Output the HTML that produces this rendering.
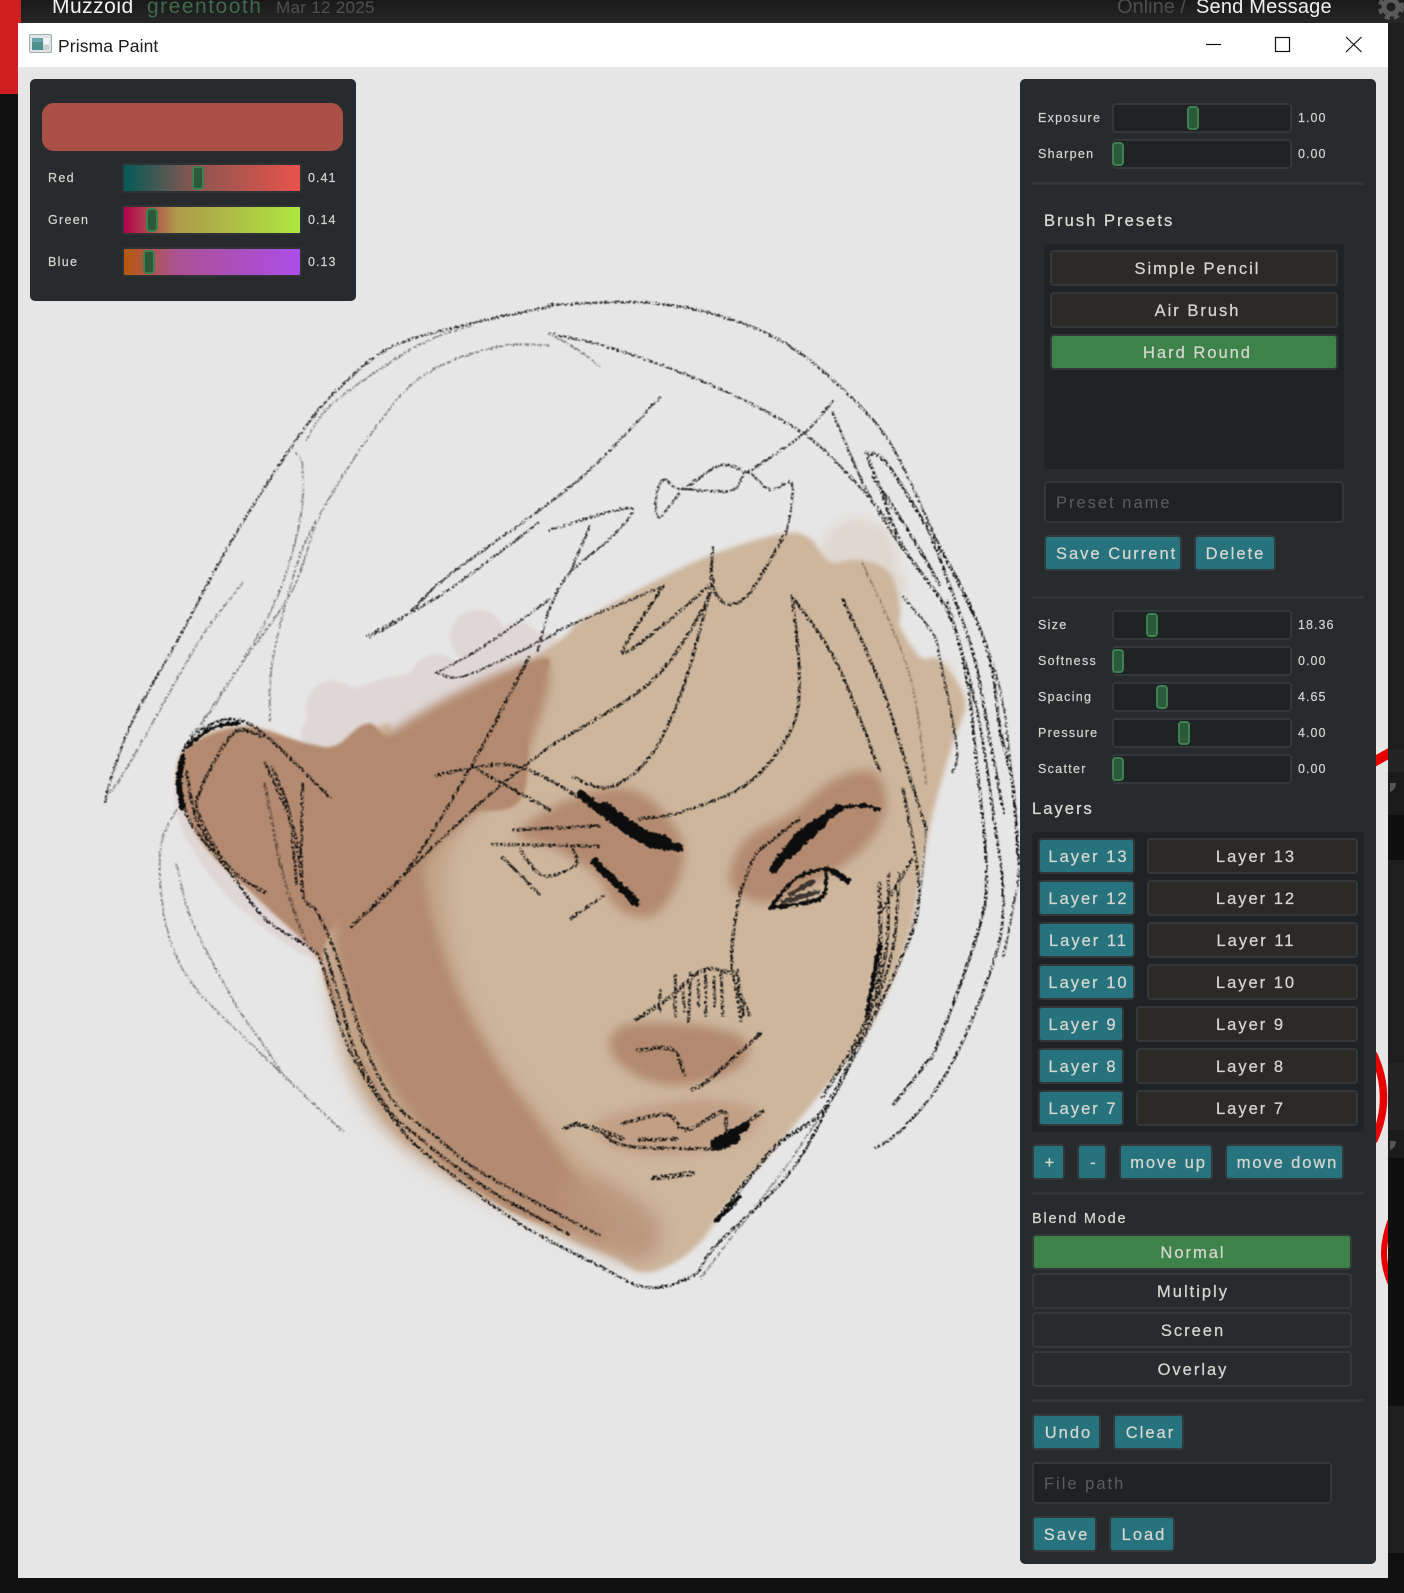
<!DOCTYPE html>
<html><head><meta charset="utf-8"><title>Prisma Paint</title>
<style>
html,body{margin:0;padding:0;background:#101010}
#r{position:relative;width:1404px;height:1593px;overflow:hidden;background:#101010;font-family:"Liberation Sans",sans-serif}
#r div,#r span{position:absolute;box-sizing:border-box;white-space:nowrap}
.t{height:20px;line-height:20px;color:#d2d2cc}
.l{font-size:12.5px;letter-spacing:1.3px;color:#d4d4cf;-webkit-text-stroke:.2px}
.v{letter-spacing:1.05px}
.h{font-size:16.5px;letter-spacing:2.05px;color:#dcdcd6;-webkit-text-stroke:.25px}
.p{border-radius:5px;background:#272b2e}
.tr{background:#1f2326;border:2px solid #33383b;border-radius:4px;height:30px;left:1112px;width:180px}
.hd{background:#2a5a3a;border:2px solid #3f8050;border-radius:4px;width:12px;height:24px}
.b{border:2px solid #33383b;border-radius:4px;height:36px;line-height:34px;text-align:center;font-size:16.5px;letter-spacing:2px;color:#d6d6d0;padding-left:4px;-webkit-text-stroke:.25px}
.te{background:#26737d}.br{background:#2d2926;padding-left:7px}.gr{background:#3d8249}.no{background:#272b2e;padding-left:2px}
.in{background:#1f2326;border:2px solid #33383b;border-radius:4px;height:42px;line-height:40px;font-size:16.5px;letter-spacing:2px;color:#5b5d5e;padding-left:10px}
.d{background:#30353a;height:3px;left:1032px;width:332px}
</style></head><body><div id="r">
<!-- background -->
<div style="left:0;top:0;width:1404px;height:23px;background:linear-gradient(#1a1a1a,#272727)"></div>
<div style="left:0;top:0;width:21px;height:94px;background:#d01f20"></div>
<div style="left:1388px;top:23px;width:16px;height:727px;background:#1e1e1e"></div>
<div style="left:1388px;top:750px;width:16px;height:22px;background:#242424"></div>
<div style="left:1388px;top:772px;width:16px;height:43px;background:#1b1b1b"></div>
<div style="left:1388px;top:815px;width:16px;height:45px;background:#0f0f0f"></div>
<div style="left:1388px;top:860px;width:16px;height:203px;background:#1e1e1e"></div>
<div style="left:1388px;top:1063px;width:16px;height:67px;background:#232323"></div>
<div style="left:1388px;top:1130px;width:16px;height:28px;background:#1b1b1b"></div>
<div style="left:1388px;top:1158px;width:16px;height:248px;background:#0f0f0f"></div>
<div style="left:1388px;top:1406px;width:16px;height:87px;background:#1e1e1e"></div>
<div style="left:1388px;top:1493px;width:16px;height:60px;background:#1e1e1e"></div>
<div class="t" style="left:52px;top:-3px;font-size:21px;color:#f2f2f2;letter-spacing:.5px">Muzzoid</div>
<div class="t" style="left:147px;top:-3px;font-size:21px;color:#3f6a4b;letter-spacing:1.5px">greentooth</div>
<div class="t" style="left:276px;top:-2px;font-size:17px;color:#4f5050;letter-spacing:.3px">Mar 12 2025</div>
<div class="t" style="left:1117px;top:-3px;font-size:20px;color:#4e4e4e">Online /</div>
<div class="t" style="left:1196px;top:-3px;font-size:20px;color:#f0f0f0;letter-spacing:.2px">Send Message</div>
<svg style="position:absolute;left:1376px;top:0" width="28" height="20"><circle cx="15" cy="7" r="7" fill="none" stroke="#5a5a5a" stroke-width="5"/><circle cx="15" cy="7" r="11" fill="none" stroke="#5a5a5a" stroke-width="4" stroke-dasharray="5 4.2"/></svg>
<svg style="position:absolute;left:1388px;top:780px" width="16" height="16"><path d="M2 3h6c0 5-3 8-6 9z" fill="#555"/></svg>
<svg style="position:absolute;left:1388px;top:1138px" width="16" height="16"><path d="M2 3h6c0 5-3 8-6 9z" fill="#555"/></svg>

<!-- window -->
<div style="left:18px;top:23px;width:1370px;height:1555px;background:#e6e6e6"></div>
<div style="left:18px;top:23px;width:1370px;height:44px;background:#fff"></div>
<svg style="position:absolute;left:29px;top:34px" width="24" height="20"><rect x=".5" y=".5" width="22" height="18" rx="1.5" fill="#dfe5e6" stroke="#a4abad"/><rect x="3" y="4" width="11" height="12" fill="#4e8f8c"/><rect x="15" y="4" width="5" height="6" fill="#f3f6f6"/><rect x="3" y="4" width="11" height="4" fill="#6aa5b0"/><rect x="14" y="11" width="6" height="5" fill="#c7d0d0"/></svg>
<div class="t" style="left:58px;top:36px;font-size:17.5px;color:#1c1c1c;letter-spacing:.1px">Prisma Paint</div>
<svg style="position:absolute;left:1200px;top:30px" width="170" height="30" fill="none" stroke="#111" stroke-width="1.2"><path d="M6 14.5H21"/><rect x="75.5" y="7.5" width="14" height="14"/><path d="M146 7L161.500 22M161.500 7L146 22"/></svg>

<!-- painting -->
<svg style="position:absolute;left:0;top:0" width="1404" height="1593" viewBox="0 0 1404 1593">
<defs>
<filter id="b0" x="-5%" y="-5%" width="110%" height="110%"><feGaussianBlur stdDeviation="2.4"/></filter>
<filter id="b1" x="-5%" y="-5%" width="110%" height="110%"><feGaussianBlur stdDeviation="1.6"/></filter>
<filter id="b2" x="-20%" y="-20%" width="140%" height="140%"><feGaussianBlur stdDeviation="5"/></filter>
<filter id="b3" x="-30%" y="-30%" width="160%" height="160%"><feGaussianBlur stdDeviation="9"/></filter>
<filter id="j" filterUnits="userSpaceOnUse" x="0" y="0" width="1404" height="1593" color-interpolation-filters="sRGB"><feTurbulence type="fractalNoise" baseFrequency=".42" numOctaves="2" seed="4" result="n"/><feDisplacementMap in="SourceGraphic" in2="n" scale="3.5" xChannelSelector="R" yChannelSelector="G" result="d"/><feColorMatrix in="n" type="matrix" values="0 0 0 0 0 0 0 0 0 0 0 0 0 0 0 7 0 0 0 -2.9" result="m"/><feComposite in="d" in2="m" operator="in"/><feGaussianBlur stdDeviation=".45"/></filter>
<filter id="k" filterUnits="userSpaceOnUse" x="0" y="0" width="1404" height="1593"><feTurbulence type="fractalNoise" baseFrequency=".3" numOctaves="2" seed="9" result="n"/><feDisplacementMap in="SourceGraphic" in2="n" scale="5.5" xChannelSelector="R" yChannelSelector="G"/><feGaussianBlur stdDeviation=".5"/></filter>
<clipPath id="w"><rect x="18" y="67" width="1370" height="1511"/></clipPath>
</defs>
<g transform="scale(1.0159)" id="sk">
<!-- pale fringes -->
<g fill="#dfd7d6" filter="url(#b1)">
<circle cx="328" cy="697" r="27"/><circle cx="381" cy="694" r="25"/><circle cx="430" cy="670" r="26"/><circle cx="470" cy="627" r="27"/><circle cx="510" cy="634" r="22"/>
</g>
<path class="s" d="M300 730L330 685 450 650 545 625 520 700 400 730Z" fill="#dfd7d6" filter="url(#b1)"/>
<path class="s" d="M172 770L183 825 232 890 303 942 318 930 200 790Z" fill="#e0d6d6" filter="url(#b1)"/>
<g fill="#dfd8d0" filter="url(#b2)"><circle cx="845" cy="548" r="38"/><circle cx="868" cy="578" r="24"/><circle cx="925" cy="665" r="14"/></g>
<!-- base skin -->
<path class="s" fill="#cdb69c" filter="url(#b0)" d="M541 637L574 610 653 568 706 544 771 525 797 530 817 553 846 551 876 564 886 600 886 617 906 647 925 650 950 689 938 731 925 775 915 815 905 870 895 920 870 985 840 1035 780 1110 720 1180 690 1222 660 1245 630 1252 600 1235 560 1220 480 1180 420 1140 380 1105 345 1040 322 965 305 925 260 890 200 830 175 770 190 730 240 714 300 732 335 735 380 712 402 722Z"/>
<!-- cheek mid-tone -->
<path class="s" fill="#c2a387" filter="url(#b3)" d="M480 760L440 850 450 950 490 1040 560 1130 640 1215 600 1230 400 1130 330 1000 340 800Z"/>
<!-- shadow -->
<path class="s" fill="#b38a70" filter="url(#b1)" d="M186 735L240 716 302 732 330 734 362 712 402 724 535 648 520 700 510 790 420 810 320 930 350 1030 390 1095 440 1140 500 1180 570 1212 500 1190 415 1125 350 1030 318 950 260 890 200 830 175 770Z"/>
<path class="s" fill="#b38a70" filter="url(#b2)" d="M528 650L522 735 495 775 425 840 420 880 445 965 490 1050 540 1120 600 1215 560 1210 485 1170 420 1115 360 1020 330 920 340 760Z"/>
<path class="s" fill="#ba947b" filter="url(#b3)" d="M600 1165L650 1205 630 1240 570 1215 545 1165Z" opacity=".8"/>
<!-- feature shadows -->
<g fill="#b38a70" filter="url(#b2)">
<path class="s" d="M565 785L625 778 668 820 670 860 645 900 610 895 585 860 545 835 510 820Z"/>
<path class="s" d="M718 862L735 825 780 800 820 768 860 760 872 795 850 835 800 870 755 888 728 880Z"/>
<path class="s" d="M600 1030L620 1008 690 1010 735 1025 725 1052 670 1068 625 1058Z"/>
</g>
<path class="s" d="M585 1105L640 1088 700 1082 748 1095 725 1125 660 1137 605 1130Z" fill="#c2a086" filter="url(#b2)"/>
<!-- pencil lines -->
<g fill="none" stroke-linecap="round" stroke-linejoin="round" filter="url(#j)">
<g stroke="#1c1c1c" stroke-width="2.6" opacity=".9">
<path class="s" d="M104 790L108 771 131 709 177 627 229 531 292 433 332 384 387 341 466 318 541 302"/>
<path class="s" d="M541 300L640 298 722 315 787 347 853 406 886 453 922 531 962 613 985 680 994 745 1003 850 998 890 988 941"/>
<path class="s" d="M364 627L400 606 440 568 541 495 591 453 650 391"/>
<path class="s" d="M362 626L410 600 450 575 530 515"/>
<path class="s" d="M430 662L475 637 541 590"/>
<path class="s" d="M430 662L459 665 541 627 558 617 653 577"/>
<path class="s" d="M541 522L620 500 603 528 561 564 541 600 530 640"/>
<path class="s" d="M581 518L561 564"/>
<path class="s" d="M736 465L790 428 820 395"/>
<path class="s" d="M672 481L720 483 736 465 758 482 779 475 779 500 774 524"/>
<path class="s" d="M736 465L709 458 672 481 654 472 646 489 649 509 669 486"/>
<path class="s" d="M820 406L853 482 889 541"/>
<path class="s" d="M541 328L607 344 705 381 790 426 837 469 883 522"/>
<path class="s" d="M889 587L918 623 925 646 942 735 938 760"/>
</g>
<g stroke="#333" stroke-width="2.3" opacity=".55">
<path class="s" d="M108 780L118 768 148 716 197 630 239 574"/>
<path class="s" d="M190 725L236 656 288 581 318 502 381 406 426 364 492 341 541 340"/>
<path class="s" d="M302 433L328 397 410 341 466 320"/>
<path class="s" d="M292 446L298 461 295 515 269 597 213 692 187 725"/>
<path class="s" d="M266 709L269 647 295 548 318 502"/>
<path class="s" d="M541 328L570 345 590 360"/>
<path class="s" d="M174 797L158 837 164 912 190 969 246 1026 279 1058 338 1114"/>
<path class="s" d="M174 851L190 908 233 990 256 1023 279 1058"/>
<path class="s" d="M849 554L895 662 912 771" stroke="#6a4a2c" opacity="1"/>
<path class="s" d="M912 816L905 884 885 950 835 1053 780 1140 715 1225 690 1258" />
</g>
<g stroke="#0d0d0d" stroke-width="3.2" opacity=".95">
<path class="s" d="M853 446L873 456 918 528 948 581 974 646 985 720 997 771 1003 850"/>
<path class="s" d="M860 470L880 500 905 540 925 575"/>
<path class="s" d="M918 530L940 590 960 650 975 730 988 800"/>
<path class="s" d="M853 446L870 490 889 538 932 600 951 662 961 745 971 849 965 910 924 1026 910 1049 880 1087"/>
<path class="s" d="M932 590L960 690 978 800 988 890 975 957 934 1053 890 1110 862 1130" stroke-width="2.8"/>
<path class="s" d="M702 539L701 574 715 594 738 584 774 524"/>
<path class="s" d="M701 574L656 613 613 642 653 577"/>
<path class="s" d="M541 735L640 672 692 600 701 574 672 679 640 745 600 775 565 765"/>
<path class="s" d="M780 587L787 662 780 716 738 770 672 799 630 806"/>
<path class="s" d="M780 587L824 653 866 758"/>
<path class="s" d="M830 590L869 679 899 775 912 816"/>
<path class="s" d="M889 775L905 884 882 955 833 1053 780 1151 705 1226 682 1256 636 1267 584 1243 508 1202 426 1141 390 1105 344 1033 318 951 305 933 262 905 226 858 187 808 177 765 184 733 210 712 236 709 263 725 308 768 325 785" stroke-width="3"/>
<path class="s" d="M320 935L335 985 352 1040 385 1095 420 1125"/>
<path class="s" d="M425 1130L480 1170 560 1215"/>
<path class="s" d="M184 760L195 810 226 855"/>
<path class="s" d="M258 725L230 722 197 779 197 804 226 854 262 879"/>
<path class="s" d="M261 751L289 815 298 876"/>
<path class="s" d="M298 772L298 876 312 897 331 940 361 1033 390 1087 426 1116 476 1155 590 1216" stroke-width="3"/>
<path class="s" d="M268 755L285 800 292 870"/>
<path class="s" d="M261 772L279 862 302 930" opacity=".5"/>
<path class="s" d="M346 912L400 858 466 751 521 647"/>
<path class="s" d="M346 912L423 837 486 779 541 735" stroke-width="2.8"/>
<path class="s" d="M430 763L508 754 590 797"/>
<path class="s" d="M464 754L541 797"/>
<path class="s" d="M485 831L590 833"/>
<path class="s" d="M505 817L590 813"/>
<path class="s" d="M512 836L535 862 567 851 564 836"/>
<path class="s" d="M495 844L531 880"/>
<path class="s" d="M562 904L594 882"/>
<path class="s" d="M744 840L787 806"/>
<path class="s" d="M744 840L728 884 721 951 738 999"/>
<path class="s" d="M726 955L732 1000"/>
<path class="s" d="M749 1017L698 1063 682 1072" stroke-width="3.800"/>
<path class="s" d="M626 1004L659 982 692 955 721 958" stroke-width="3.800"/>
<path d="M665 960L665 1000M680 958L678 1005M695 955L695 1000M710 958L712 1000M722 960L730 1005M650 975L650 995M672 970L674 995M688 965L688 990M703 962L704 990" stroke-width="3"/>
<path class="s" d="M628 1034L662 1033 674 1058" stroke-width="3.800"/>
<path class="s" d="M866 870L866 951 853 1006 813 1090 761 1131 705 1202" stroke-width="4.200"/>
<path class="s" d="M875 860L872 940 850 1010 810 1080"/>
<path class="s" d="M885 860L880 930 862 990"/>
<path class="s" d="M898 846L866 900"/>
<path class="s" d="M556 1111L571 1107 613 1121" stroke-width="5"/>
<path class="s" d="M613 1106L656 1097 676 1112 712 1094 718 1114 751 1094" stroke-width="3.800"/>
<path class="s" d="M630 1122L666 1121" stroke-width="3.800"/>
<path class="s" d="M590 1112L617 1128 705 1131" stroke-width="3.400"/>
<path class="s" d="M643 1160L682 1155" stroke-width="5"/>
</g>
</g>
<!-- heavy features -->
<g stroke="#0d0d0d" fill="none" stroke-linecap="round" stroke-linejoin="round" filter="url(#k)">
<path class="s" d="M572 782L610 812 640 830 669 834" stroke-width="8"/>
<path class="s" d="M595 795L630 820 655 828" stroke-width="11"/>
<path d="M585 848L626 888" stroke-width="8"/>
<path class="s" d="M761 856L787 823 826 795" stroke-width="8"/>
<path d="M775 840L810 808" stroke-width="11"/>
<path class="s" d="M826 795L850 793 866 797" stroke-width="3"/>
<path class="s" d="M758 894L781 867 813 855 836 867" stroke-width="3.500"/>
<path class="s" d="M760 893L785 890 810 882 813 858" stroke-width="3.500"/>
<path d="M778 880L800 868M770 888L805 878" stroke-width="4.500" opacity=".75"/>
<path d="M820 858L835 868" stroke-width="5"/>
<path d="M705 1124L735 1108" stroke-width="8"/>
<path d="M706 1126L722 1120" stroke-width="13"/>
<path d="M705 1202L728 1178" stroke-width="4"/>
<path d="M866 930L853 1000" stroke-width="4"/>
<path class="s" d="M180 745L176 770 180 795" stroke-width="6"/>
<path class="s" d="M184 735L210 716 236 712" stroke-width="3.500"/>
</g>
</g>
<!-- red strokes at the edge -->
<g fill="none" stroke="#e60000" stroke-linecap="round" clip-path="url(#w)">
<path d="M1370 764L1395 750" stroke-width="10"/>
<path d="M1374 1055Q1393 1098 1374 1140" stroke-width="7.500"/>
<path d="M1390 1222C1382 1245 1382 1262 1390 1282" stroke-width="6"/>
</g>
</svg>

<!-- colour panel -->
<div class="p" style="left:30px;top:79px;width:326px;height:222px"></div>
<div style="left:42px;top:103px;width:301px;height:48px;background:#a94f45;border-radius:12px"></div>
<div class="t l" style="left:48px;top:168px">Red</div>
<div class="t l" style="left:48px;top:210px">Green</div>
<div class="t l" style="left:48px;top:252px">Blue</div>
<div style="left:122px;top:163px;width:180px;height:30px;border:2px solid #2f3336;border-radius:3px;background:linear-gradient(90deg,#035b57,#8a5650 40%,#e8534a)"></div>
<div style="left:122px;top:205px;width:180px;height:30px;border:2px solid #2f3336;border-radius:3px;background:linear-gradient(90deg,#b5004f,#ae9a4a 30%,#aee840)"></div>
<div style="left:122px;top:247px;width:180px;height:30px;border:2px solid #2f3336;border-radius:3px;background:linear-gradient(90deg,#b5580a,#ab5294 30%,#ab4de8)"></div>
<div class="hd" style="left:192px;top:166px"></div>
<div class="hd" style="left:146px;top:208px"></div>
<div class="hd" style="left:143px;top:250px"></div>
<div class="t l v" style="left:308px;top:168px">0.41</div>
<div class="t l v" style="left:308px;top:210px">0.14</div>
<div class="t l v" style="left:308px;top:252px">0.13</div>

<!-- right panel -->
<div class="p" style="left:1020px;top:79px;width:356px;height:1485px"></div>
<div class="t l" style="left:1038px;top:108px">Exposure</div><div class="tr" style="top:103px"></div><div class="hd" style="left:1187px;top:106px"></div><div class="t l v" style="left:1298px;top:108px">1.00</div>
<div class="t l" style="left:1038px;top:144px">Sharpen</div><div class="tr" style="top:139px"></div><div class="hd" style="left:1112px;top:142px"></div><div class="t l v" style="left:1298px;top:144px">0.00</div>
<div class="d" style="top:182px"></div>
<div class="t h" style="left:1044px;top:211px">Brush Presets</div>
<div style="left:1044px;top:244px;width:300px;height:225px;background:#1f2326;border-radius:4px"></div>
<div class="b br" style="left:1050px;top:250px;width:288px">Simple Pencil</div>
<div class="b br" style="left:1050px;top:292px;width:288px">Air Brush</div>
<div class="b gr" style="left:1050px;top:334px;width:288px;padding-left:7px">Hard Round</div>
<div class="in" style="left:1044px;top:481px;width:300px">Preset name</div>
<div class="b te" style="left:1044px;top:535px;width:138px;text-align:left;padding-left:10px">Save Current</div>
<div class="b te" style="left:1194px;top:535px;width:82px;padding-left:1px">Delete</div>
<div class="d" style="top:596px"></div>
<div class="t l" style="left:1038px;top:615px">Size</div><div class="tr" style="top:610px"></div><div class="hd" style="left:1146px;top:613px"></div><div class="t l v" style="left:1298px;top:615px">18.36</div>
<div class="t l" style="left:1038px;top:651px">Softness</div><div class="tr" style="top:646px"></div><div class="hd" style="left:1112px;top:649px"></div><div class="t l v" style="left:1298px;top:651px">0.00</div>
<div class="t l" style="left:1038px;top:687px">Spacing</div><div class="tr" style="top:682px"></div><div class="hd" style="left:1156px;top:685px"></div><div class="t l v" style="left:1298px;top:687px">4.65</div>
<div class="t l" style="left:1038px;top:723px">Pressure</div><div class="tr" style="top:718px"></div><div class="hd" style="left:1178px;top:721px"></div><div class="t l v" style="left:1298px;top:723px">4.00</div>
<div class="t l" style="left:1038px;top:759px">Scatter</div><div class="tr" style="top:754px"></div><div class="hd" style="left:1112px;top:757px"></div><div class="t l v" style="left:1298px;top:759px">0.00</div>
<div class="t h" style="left:1032px;top:799px">Layers</div>
<div style="left:1032px;top:832px;width:332px;height:300px;background:#1f2326;border-radius:4px"></div>
<div class="b te" style="left:1038px;top:838px;width:97px">Layer 13</div><div class="b br" style="left:1147px;top:838px;width:211px">Layer 13</div>
<div class="b te" style="left:1038px;top:880px;width:97px">Layer 12</div><div class="b br" style="left:1147px;top:880px;width:211px">Layer 12</div>
<div class="b te" style="left:1038px;top:922px;width:97px">Layer 11</div><div class="b br" style="left:1147px;top:922px;width:211px">Layer 11</div>
<div class="b te" style="left:1038px;top:964px;width:97px">Layer 10</div><div class="b br" style="left:1147px;top:964px;width:211px">Layer 10</div>
<div class="b te" style="left:1038px;top:1006px;width:86px">Layer 9</div><div class="b br" style="left:1136px;top:1006px;width:222px">Layer 9</div>
<div class="b te" style="left:1038px;top:1048px;width:86px">Layer 8</div><div class="b br" style="left:1136px;top:1048px;width:222px">Layer 8</div>
<div class="b te" style="left:1038px;top:1090px;width:86px">Layer 7</div><div class="b br" style="left:1136px;top:1090px;width:222px">Layer 7</div>
<div class="b te" style="left:1032px;top:1144px;width:33px">+</div>
<div class="b te" style="left:1077px;top:1144px;width:30px">-</div>
<div class="b te" style="left:1119px;top:1144px;width:94px;padding-left:5px;letter-spacing:1.9px">move up</div>
<div class="b te" style="left:1225px;top:1144px;width:119px;padding-left:6px;letter-spacing:1.9px">move down</div>
<div class="d" style="top:1192px"></div>
<div class="t" style="left:1032px;top:1209px;font-size:14.5px;letter-spacing:1.8px;color:#d8d8d2;-webkit-text-stroke:.2px">Blend Mode</div>
<div class="b gr" style="left:1032px;top:1234px;width:320px;padding-left:2px">Normal</div>
<div class="b no" style="left:1032px;top:1273px;width:320px">Multiply</div>
<div class="b no" style="left:1032px;top:1312px;width:320px">Screen</div>
<div class="b no" style="left:1032px;top:1351px;width:320px">Overlay</div>
<div class="d" style="top:1399px"></div>
<div class="b te" style="left:1032px;top:1414px;width:69px">Undo</div>
<div class="b te" style="left:1113px;top:1414px;width:71px">Clear</div>
<div class="in" style="left:1032px;top:1462px;width:300px">File path</div>
<div class="b te" style="left:1032px;top:1516px;width:65px">Save</div>
<div class="b te" style="left:1109px;top:1516px;width:66px">Load</div>
</div>
<script>
document.querySelectorAll('path.s').forEach(function(e){
 var d=e.getAttribute('d'),z=/Z\s*$/i.test(d),n=d.match(/-?[\d.]+/g).map(Number),p=[],o,i,a,b,c,f,L;
 for(i=0;i<n.length;i+=2)p.push([n[i],n[i+1]]);
 L=p.length;o='M'+p[0][0]+' '+p[0][1];
 function g(k){return z?p[(k+L)%L]:p[Math.max(0,Math.min(L-1,k))]}
 for(i=0;i<(z?L:L-1);i++){a=g(i-1);b=g(i);c=g(i+1);f=g(i+2);
  o+='C'+(b[0]+(c[0]-a[0])/6).toFixed(1)+' '+(b[1]+(c[1]-a[1])/6).toFixed(1)+' '+(c[0]-(f[0]-b[0])/6).toFixed(1)+' '+(c[1]-(f[1]-b[1])/6).toFixed(1)+' '+c[0]+' '+c[1];}
 e.setAttribute('d',o+(z?'Z':''));
});
</script>
</body></html>
